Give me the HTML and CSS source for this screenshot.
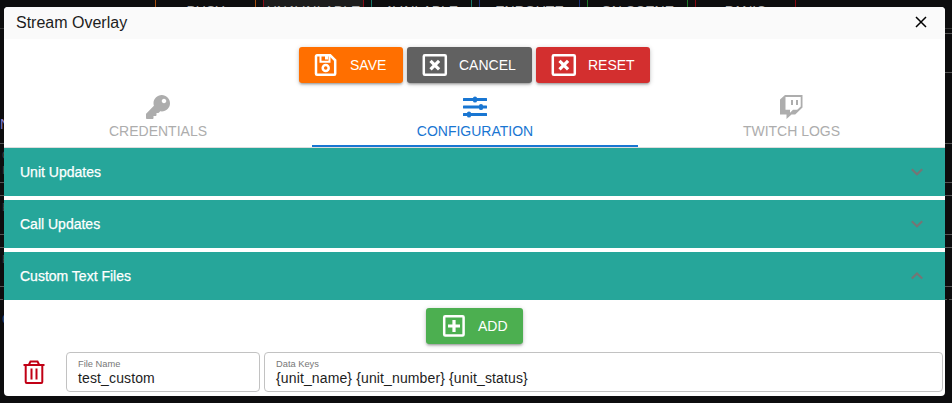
FILE: index.html
```html
<!DOCTYPE html>
<html lang="en">
<head>
<meta charset="utf-8">
<title>Stream Overlay</title>
<link rel="stylesheet" href="styles.css">
</head>
<body>
<div class="backdrop">
  <div class="statuses">
    <span class="status busy">BUSY</span>
    <span class="status unavailable">UNAVAILABLE</span>
    <span class="status available">AVAILABLE</span>
    <span class="status enroute">ENROUTE</span>
    <span class="status scene">ON SCENE</span>
    <span class="status panic">PANIC</span>
  </div>
  <div class="rule top"></div>
  <div class="rule r5 right"></div>
  <div class="rule r39 right"></div>
  <div class="rule r71"><span class="heading">N</span></div>
  <div class="rule r39 cell">C<br>I</div>
  <div class="rule r13"></div>
  <div class="rule r39 cell">E</div>
  <div class="rule r13"></div>
  <div class="rule r39 cell">E</div>
  <div class="rule r13 dashed"></div>
  <div class="link">C</div>
</div>

<main class="dialog">
  <header class="titlebar">
    <h1>Stream Overlay</h1>
    <svg class="close" viewBox="0 0 12 12"><path d="M1 1 11 11M11 1 1 11"/></svg>
  </header>
  <div class="actions">
    <button class="btn save">
      <svg viewBox="0 0 24 24"><path class="line" d="M3 2.300h13.200l5 5V20.700a1 1 0 0 1-1 1H3a1 1 0 0 1-1-1V3.300a1 1 0 0 1 1-1z"/><path class="line thin" d="M6.500 2v6.700h9V2"/><path d="M11 2h3v4.500h-3z"/><circle class="line" cx="11.700" cy="15" r="3"/></svg>
      <span>SAVE</span>
    </button>
    <button class="btn cancel">
      <svg viewBox="0 0 24 24"><rect class="line" x="1.800" y="2.300" width="22" height="19.400" rx="1"/><path class="cross" d="m8.500 7.800 8.600 8.600m0-8.600-8.600 8.600"/></svg>
      <span>CANCEL</span>
    </button>
    <button class="btn reset">
      <svg viewBox="0 0 24 24"><rect class="line" x="1.800" y="2.300" width="22" height="19.400" rx="1"/><path class="cross" d="m8.500 7.800 8.600 8.600m0-8.600-8.600 8.600"/></svg>
      <span>RESET</span>
    </button>
  </div>
  <nav class="tabs">
    <div class="tab">
      <svg viewBox="0 0 512 512"><path d="M512 176c0 97.200-78.800 176-176 176-11.220 0-22.190-1.060-32.830-3.070l-24.010 27.010A24 24 0 0 1 261.220 384H224v40c0 13.250-10.750 24-24 24h-40v40c0 13.250-10.750 24-24 24H24c-13.250 0-24-10.750-24-24v-78.060c0-6.360 2.530-12.470 7.030-16.970l161.800-161.800C163.110 213.810 160 195.270 160 176 160 78.800 238.800 0 336 0s176 78.510 176 176zM336 128c0 26.510 21.490 48 48 48s48-21.490 48-48-21.490-48-48-48-48 21.490-48 48z"/></svg>
      <span>CREDENTIALS</span>
    </div>
    <div class="tab active">
      <svg viewBox="0 0 24 24"><path d="M.5 3H10a2 1.600 0 0 1 4 0h9.500a.5.500 0 0 1 .5.500v2a.5.500 0 0 1-.5.500H14a2 1.600 0 0 1-4 0H.5a.5.500 0 0 1-.5-.5v-2A.5.500 0 0 1 .5 3zM.5 10.500H16a2 1.600 0 0 1 4 0h3.500a.5.500 0 0 1 .5.500v2a.5.500 0 0 1-.5.500H20a2 1.600 0 0 1-4 0H.5a.5.500 0 0 1-.5-.5v-2a.5.500 0 0 1 .5-.5zM.5 18H4a2 1.600 0 0 1 4 0h15.500a.5.500 0 0 1 .5.500v2a.5.500 0 0 1-.5.500H8a2 1.600 0 0 1-4 0H.5a.5.500 0 0 1-.5-.5v-2a.5.500 0 0 1 .5-.5z"/></svg>
      <span>CONFIGURATION</span>
    </div>
    <div class="tab">
      <svg viewBox="0 0 24 24"><path fill-rule="evenodd" d="M5 0H22.500v12.500L15.200 19.500h-3.700L6.500 24v-4.500H0V4.500zM5.500 2v12.700h4.500v3l3-3h4.200l3.500-3.200V2zM11 5h2v5h-2zM16 5h2v5h-2z"/></svg>
      <span>TWITCH LOGS</span>
    </div>
  </nav>
  <section class="panels">
    <div class="panel"><span>Unit Updates</span><svg viewBox="0 0 12 8"><path d="m.8 1.300 5.200 5 5.200-5"/></svg></div>
    <div class="panel"><span>Call Updates</span><svg viewBox="0 0 12 8"><path d="m.8 1.300 5.200 5 5.200-5"/></svg></div>
    <div class="panel"><span>Custom Text Files</span><svg viewBox="0 0 12 8"><path d="m.8 6.500 5.200-5 5.200 5"/></svg></div>
  </section>
  <div class="actions">
    <button class="btn add">
      <svg viewBox="0 0 24 24"><rect class="line" x="2.200" y="2.200" width="19.400" height="19.400" rx="1"/><path class="plus" d="M12 6v12M6 12h12"/></svg>
      <span>ADD</span>
    </button>
  </div>
  <div class="file">
    <svg class="trash" viewBox="0 0 22 24"><path d="M.5 4.900h21M6 4.500l1.500-3h7l1.500 3M2.700 5v17a1 1 0 0 0 1 1h14.600a1 1 0 0 0 1-1V5M8.500 8.500v11M13.500 8.500v11"/></svg>
    <div class="field name"><label>File Name</label><span>test_custom</span></div>
    <div class="field keys"><label>Data Keys</label><span>{unit_name} {unit_number} {unit_status}</span></div>
  </div>
</main>
</body>
</html>
```
FILE: styles.css
```css
* { box-sizing: border-box; }
body {
  margin: 0;
  height: 403px;
  overflow: hidden;
  background: #0d0d0e;
  font: 14px/20px "Liberation Sans", Arial, sans-serif;
}
.backdrop { height: 403px; overflow: hidden; }
.statuses { display: flex; gap: 7px; height: 28px; padding-left: 155px; }
.status {
  width: 101px;
  padding-top: 1px;
  border-style: solid;
  border-width: 0 1px;
  color: #aaa;
  text-align: center;
}
.busy { border-color: #a84e0c; }
.unavailable { border-color: #8a0d17; background: #1d1d1d; }
.available { border-color: #187568; }
.enroute { border-color: #1b3278; }
.scene { border-color: #1d7826; }
.panic { border-color: #880710; }
.rule { border-bottom: 1px solid #555; }
.top { height: 1px; border-color: #333; }
.right { width: 20px; margin-left: auto; }
.r5 { height: 5px; }
.r13 { height: 13px; }
.r39 { height: 39px; }
.r71 { height: 71px; padding-top: 41px; }
.heading { color: #8a7fc9; }
.cell { padding-left: 2px; font-size: 11px; line-height: 15px; padding-top: 4px; color: #444; }
.link { padding: 9px 0 0 2px; color: #2a4a78; }
.dashed { border-bottom-style: dashed; }

.dialog {
  position: absolute;
  top: 7px;
  left: 4px;
  width: 941px;
  height: 389px;
  overflow: hidden;
  border-radius: 4px;
  background: #fff;
}
.titlebar {
  display: flex;
  align-items: center;
  justify-content: space-between;
  height: 32px;
  padding: 0 18px 0 12px;
  background: #fafafa;
}
h1 { margin: 0; font-size: 16px; font-weight: 400; line-height: 30px; color: #1d1d1d; }
.close { width: 12px; height: 12px; margin-bottom: 2px; fill: none; stroke: #000; stroke-width: 1.5; }
.actions { display: flex; justify-content: center; gap: 4px; padding-top: 8px; }
.btn {
  display: flex;
  align-items: center;
  justify-content: flex-start;
  gap: 12px;
  height: 36px;
  padding: 0 15px;
  border: 0;
  border-radius: 3px;
  color: #fff;
  font: inherit;
  box-shadow: 0 1px 5px rgba(0,0,0,.2), 0 2px 2px rgba(0,0,0,.14), 0 3px 1px -2px rgba(0,0,0,.12);
}
.btn svg { width: 24px; height: 24px; fill: #fff; flex: none; overflow: visible; }
.btn .line { fill: none; stroke: #fff; stroke-width: 2.5; }
.btn .thin { stroke-width: 2; }
.cross, .plus { stroke: #fff; stroke-width: 3.2; }
.save { width: 104px; background: #ff6f00; }
.cancel { width: 125px; gap: 13px; background: #616161; }
.reset { width: 114px; gap: 13px; background: #d32f2f; }
.add { width: 97px; padding: 0 13px 0 16px; background: #4caf50; }

.tabs { display: grid; grid-template-columns: 308px 326px 307px; height: 65px; border-bottom: 1px solid #ddd; }
.tab {
  display: flex;
  flex-direction: column;
  align-items: center;
  padding-top: 12px;
  color: #adadad;
  line-height: 24px;
}
.tab svg { width: 24px; height: 24px; fill: currentColor; flex: none; }
.active { color: #1976d2; border-bottom: 2px solid #1976d2; }

.panels { display: grid; gap: 4px; }
.panel {
  display: flex;
  align-items: center;
  justify-content: space-between;
  height: 48px;
  padding: 0 22px 0 16px;
  background: #26a69a;
  color: #fff;
}
.panel span { -webkit-text-stroke: .25px #fff; }
.panel svg { width: 12px; height: 8px; fill: none; stroke: #757575; stroke-width: 2.1; }

.file { display: flex; align-items: center; padding: 8px 2px 0 19px; }
.trash { width: 22px; height: 24px; margin-right: 21px; fill: none; stroke: #c10015; stroke-width: 2; }
.field {
  display: flex;
  flex-direction: column;
  height: 40px;
  padding: 5px 11px 0;
  border: 1px solid #c2c2c2;
  border-radius: 4px;
  color: #1d1d1d;
}
.field label { font-size: 9.300px; line-height: 12px; color: #777; }
.field span { line-height: 16px; letter-spacing: .13px; }
.name { width: 194px; margin-right: 4px; }
.keys { flex: 1; }
```
